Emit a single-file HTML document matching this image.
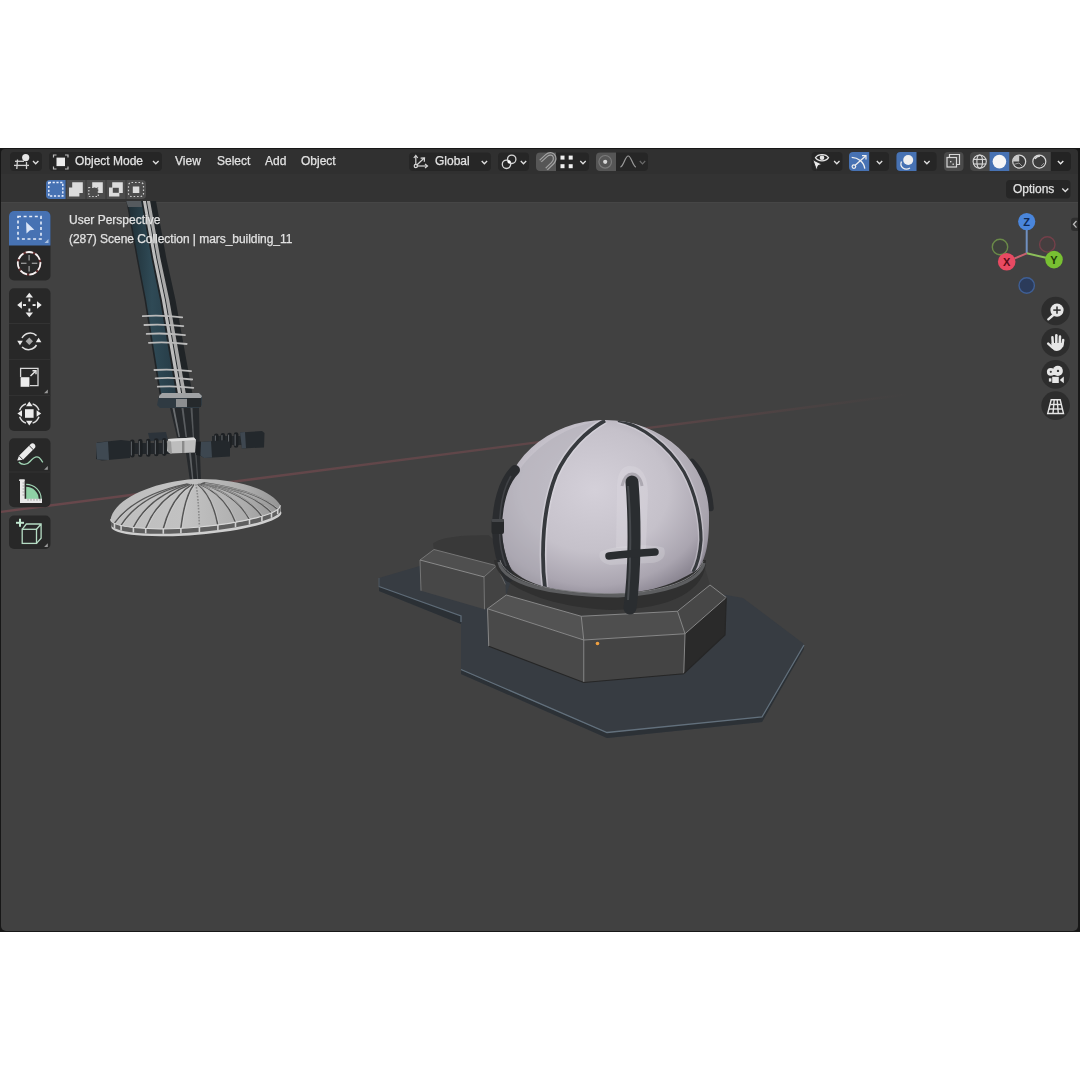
<!DOCTYPE html>
<html><head><meta charset="utf-8">
<style>
*{margin:0;padding:0;box-sizing:border-box}
html,body{width:1080px;height:1080px;background:#fff;overflow:hidden;font-family:"Liberation Sans",sans-serif;position:relative}
.a{position:absolute}
#win{left:0;top:148px;width:1080px;height:784px;background:#171717}
#h1{left:1px;top:1px;width:1077px;height:25px;background:#303030;border-radius:4px 4px 0 0}
#h2{left:1px;top:26px;width:1077px;height:28px;background:#333333}
#vp{left:1px;top:54px;width:1077px;height:729px;background:#414141;border-radius:0 0 5px 5px;overflow:hidden;border-top:1.5px solid #464646}
.t{position:absolute;color:#e2e2e2;font-size:12px;white-space:nowrap;line-height:14px;-webkit-font-smoothing:antialiased;will-change:transform;-webkit-text-stroke:0.25px #e2e2e2}
.btn{position:absolute;background:#1e1e1e;border-radius:4px}
.tb{position:absolute;left:8px;width:41px;background:#232323}
svg{position:absolute;overflow:visible}
</style></head><body>
<div id="win" class="a">
  <div id="h1" class="a"></div>
  <div id="h2" class="a"></div>
  <div id="vp" class="a"></div>
</div>

<svg class="a" style="left:0;top:0" width="1080" height="1080" viewBox="0 0 1080 1080">
<defs>
<clipPath id="vpc"><rect x="1" y="201" width="1077" height="730" rx="5"/></clipPath>
<linearGradient id="axg" x1="0" y1="0" x2="1" y2="0"><stop offset="0" stop-color="#7a4a50" stop-opacity="0.7"/><stop offset="0.7" stop-color="#744a4e" stop-opacity="0.55"/><stop offset="1" stop-color="#6a4444" stop-opacity="0"/></linearGradient>
<radialGradient id="domeg" cx="0.45" cy="0.4" r="0.65"><stop offset="0" stop-color="#d4d0d9"/><stop offset="0.55" stop-color="#c5c1ca"/><stop offset="0.85" stop-color="#aaa5b0"/><stop offset="1" stop-color="#8c8793"/></radialGradient>
<radialGradient id="dishg" cx="0.5" cy="0.1" r="0.9"><stop offset="0" stop-color="#d8d8d8"/><stop offset="0.7" stop-color="#bdbdbd"/><stop offset="1" stop-color="#8c8c8c"/></radialGradient>
<linearGradient id="tealg" x1="0" y1="0" x2="1" y2="0"><stop offset="0" stop-color="#1f2e35"/><stop offset="0.5" stop-color="#2f4a56"/><stop offset="1" stop-color="#263b46"/></linearGradient>
<clipPath id="domec"><path d="M501,515 A104,95 0 0 1 709,515 C709.5,545 705,560 698,569 C670,588 640,594 604,594 C560,593 527,585 512,570 C505,558 501,540 501,515 Z"/></clipPath>
</defs>
<g clip-path="url(#vpc)">
<!-- axis line -->
<line x1="0" y1="512" x2="910" y2="394" stroke="url(#axg)" stroke-width="2.4"/>
<!-- TOWER shaft -->
<g id="tower">
<!-- shaft -->
<polygon points="126.3,201 136.5,258 144.5,300 159.5,394 192.5,394 175.5,300 166.3,258 156.0,201" fill="#202427"/>
<polygon points="127.8,201 138.0,258 146.1,300 161.2,394 176.0,394 160.0,300 151.4,258 141.2,201" fill="url(#tealg)"/>
<polygon points="142.9,201 153.2,258 161.9,300 178.0,394 181.3,394 165.0,300 156.2,258 145.9,201" fill="#bdbdbd"/>
<polygon points="146.8,201 157.1,258 165.9,300 182.3,394 185.9,394 169.3,300 160.3,258 150.1,201" fill="#a9a9a9"/>
<polygon points="126.3,201 141,201 142,207 128,207" fill="#555a5e"/>
<path d="M142.8,316.1 Q162.5,314.90000000000003 182.2,317.3" stroke="#b9b9b9" stroke-width="1.8" fill="none" stroke-linecap="round"/>
<path d="M144.4,325 Q163.85000000000002,323.8 183.3,326.2" stroke="#b9b9b9" stroke-width="1.8" fill="none" stroke-linecap="round"/>
<path d="M146.7,333.9 Q165.85,332.7 185,335.09999999999997" stroke="#b9b9b9" stroke-width="1.8" fill="none" stroke-linecap="round"/>
<path d="M148.9,342.8 Q167.8,341.6 186.7,344.0" stroke="#b9b9b9" stroke-width="1.8" fill="none" stroke-linecap="round"/>
<path d="M154.4,370 Q172.75,368.8 191.1,371.2" stroke="#b9b9b9" stroke-width="1.8" fill="none" stroke-linecap="round"/>
<path d="M155.6,378.3 Q173.89999999999998,377.1 192.2,379.5" stroke="#b9b9b9" stroke-width="1.8" fill="none" stroke-linecap="round"/>
<path d="M157.8,386.7 Q175.55,385.5 193.3,387.9" stroke="#b9b9b9" stroke-width="1.8" fill="none" stroke-linecap="round"/>
<!-- clamp nut -->
<path d="M159,396 L162,393 L199,393 L202,396 L202,405 L199,408 L160,408 L157,405 Z" fill="#2f3a42"/>
<path d="M159,396 L162,393 L199,393 L202,396 L201,398 L159,398 Z" fill="#a0a2a4"/>
<rect x="176" y="399" width="11" height="8" fill="#8c8e90"/>
<rect x="187" y="398" width="14" height="9" fill="#25292c"/>
<!-- rods -->
<polygon points="170,408 199,408 199.5,437 200,453 201,481 190,481 186,453 177,437" fill="#26292c"/>
<path d="M172.5,408 L174.5,408 L180,437 L178.5,437 Z" fill="#6a6d70"/>
<path d="M181.5,408 L183.5,408 L187,437 L185.5,437 Z" fill="#5a5d60"/>
<path d="M190.5,408 L192.5,408 L194,437 L192.8,437 Z" fill="#55585b"/>
<path d="M189,453 L191,453 L193.5,481 L192.3,481 Z" fill="#5e6164"/>
<path d="M195,453 L196.5,453 L198.3,481 L197.3,481 Z" fill="#4a4d50"/>
<!-- back right springs + bar -->
<rect x="212" y="436" width="32" height="9" fill="#24282b"/>
<rect x="214.0" y="433.5" width="4.6" height="15.5" rx="2.3" fill="#1d2023"/>
<rect x="214.8" y="435.5" width="1.1" height="11.5" fill="#5e6266"/>
<rect x="220.6" y="433.1" width="4.6" height="15.5" rx="2.3" fill="#1d2023"/>
<rect x="221.4" y="435.1" width="1.1" height="11.5" fill="#5e6266"/>
<rect x="227.2" y="432.7" width="4.6" height="15.5" rx="2.3" fill="#1d2023"/>
<rect x="228.0" y="434.7" width="1.1" height="11.5" fill="#5e6266"/>
<rect x="233.8" y="432.3" width="4.6" height="15.5" rx="2.3" fill="#1d2023"/>
<rect x="234.6" y="434.3" width="1.1" height="11.5" fill="#5e6266"/>
<!-- far right block -->
<path d="M240,432.5 L262,431 L264.5,433 L264,447.5 L242,448.5 Z" fill="#23282c"/>
<path d="M240,432.5 L245,432 L246,448.3 L242,448.5 Z" fill="#3e4750"/>
<!-- back left block -->
<path d="M148,433 L166,432 L168,440 L150,441 Z" fill="#2c333a"/>
<!-- left bar + springs -->
<rect x="128" y="443" width="42" height="11" fill="#22262a"/>
<rect x="130.0" y="439.5" width="4.6" height="18.0" rx="2.3" fill="#1d2023"/>
<rect x="130.8" y="441.5" width="1.1" height="14.0" fill="#5e6266"/>
<rect x="138.0" y="439.1" width="4.6" height="18.0" rx="2.3" fill="#1d2023"/>
<rect x="138.8" y="441.1" width="1.1" height="14.0" fill="#5e6266"/>
<rect x="146.0" y="438.7" width="4.6" height="18.0" rx="2.3" fill="#1d2023"/>
<rect x="146.8" y="440.7" width="1.1" height="14.0" fill="#5e6266"/>
<rect x="154.0" y="438.3" width="4.6" height="18.0" rx="2.3" fill="#1d2023"/>
<rect x="154.8" y="440.3" width="1.1" height="14.0" fill="#5e6266"/>
<rect x="162.0" y="437.9" width="4.6" height="18.0" rx="2.3" fill="#1d2023"/>
<rect x="162.8" y="439.9" width="1.1" height="14.0" fill="#5e6266"/>
<!-- left block -->
<path d="M97,442.5 L121,440 L130,441 L130,458 L102,460.5 L96,459 Z" fill="#23282c"/>
<path d="M96,443 L108,441.5 L109,460 L97,459.5 Z" fill="#3f4952"/>
<!-- center clamp -->
<path d="M168,439 L194,437.5 L196,440 L195,452.5 L170,453.5 L167,451 Z" fill="#bdbdbd"/>
<path d="M168,439 L194,437.5 L196,440 L171,441.5 Z" fill="#dcdcdc"/>
<path d="M167,441 L171,441.5 L172,453.5 L168,452 Z" fill="#9a9a9a"/>
<rect x="182" y="441" width="2.4" height="12" fill="#8a8a8a"/>
<!-- right near block -->
<path d="M196,442 L201,441.5 L201,456 L196,455 Z" fill="#1c1f22"/>
<path d="M201,442 L226,440 L230,442.5 L230,456.5 L204,458 L200,455.5 Z" fill="#23282c"/>
<path d="M201,442 L211,441.3 L212,457.5 L204,458 L200.5,455.5 Z" fill="#3d4750"/>
</g>
<!-- DISH -->
<g id="dish">
<linearGradient id="dishl" x1="0" y1="0" x2="1" y2="0"><stop offset="0" stop-color="#bebebe"/><stop offset="0.45" stop-color="#c2c2c2"/><stop offset="0.8" stop-color="#acacac"/><stop offset="1" stop-color="#959595"/></linearGradient>
<path d="M110.6,519.3 A85,15 -4.75 0 0 280.3,505.2 L280.8,511.2 A85,15 -4.75 0 1 111.6,528.3 Z" fill="#cfcfcf"/>
<path d="M110.6,519.3 A85,15 -4.75 0 0 280.3,505.2 L280.3,509.2 A85,15 -4.75 0 1 111.1,525.3 Z" fill="#5f5f5f"/>
<path d="M110.6,519.3 C114,500 150,482 195,479 C238,478 272,490 280.3,505.2 A85,15 -4.75 0 1 110.6,519.3 Z" fill="url(#dishl)"/>
<path d="M187.4,484.0 Q134.9,495.0 114.5,523.2" stroke="#555" stroke-width="1.6" fill="none"/>
<path d="M188.5,484.3 Q136.1,495.3 115.7,523.2" stroke="#d6d6d6" stroke-width="0.7" fill="none" opacity="0.8"/>
<line x1="114.5" y1="523.2" x2="114.5" y2="528.2" stroke="#d0d0d0" stroke-width="1.6"/>
<path d="M188.1,484.2 Q139.8,495.7 121.1,525.4" stroke="#555" stroke-width="1.6" fill="none"/>
<path d="M189.2,484.5 Q141.0,496.0 122.3,525.4" stroke="#d6d6d6" stroke-width="0.7" fill="none" opacity="0.8"/>
<line x1="121.1" y1="525.4" x2="121.1" y2="530.4" stroke="#d0d0d0" stroke-width="1.6"/>
<path d="M189.3,484.3 Q149.0,496.4 133.4,527.5" stroke="#555" stroke-width="1.6" fill="none"/>
<path d="M190.4,484.6 Q150.2,496.7 134.6,527.5" stroke="#d6d6d6" stroke-width="0.7" fill="none" opacity="0.8"/>
<line x1="133.4" y1="527.5" x2="133.4" y2="532.5" stroke="#d0d0d0" stroke-width="1.6"/>
<path d="M190.5,484.4 Q158.2,496.7 145.7,528.4" stroke="#555" stroke-width="1.6" fill="none"/>
<path d="M191.6,484.7 Q159.4,497.0 146.9,528.4" stroke="#d6d6d6" stroke-width="0.7" fill="none" opacity="0.8"/>
<line x1="145.7" y1="528.4" x2="145.7" y2="533.4" stroke="#d0d0d0" stroke-width="1.6"/>
<path d="M192.3,484.4 Q171.4,496.9 163.3,528.8" stroke="#555" stroke-width="1.6" fill="none"/>
<path d="M193.4,484.7 Q172.6,497.2 164.5,528.8" stroke="#d6d6d6" stroke-width="0.7" fill="none" opacity="0.8"/>
<line x1="163.3" y1="528.8" x2="163.3" y2="533.8" stroke="#d0d0d0" stroke-width="1.6"/>
<path d="M194.0,484.4 Q184.6,496.7 180.9,528.2" stroke="#555" stroke-width="1.6" fill="none"/>
<path d="M195.1,484.7 Q185.8,497.0 182.1,528.2" stroke="#d6d6d6" stroke-width="0.7" fill="none" opacity="0.8"/>
<line x1="180.9" y1="528.2" x2="180.9" y2="533.2" stroke="#d0d0d0" stroke-width="1.6"/>
<path d="M195.9,484.3 Q198.4,496.2 199.4,527.0" stroke="#8a8a8a" stroke-width="1.6" fill="none" stroke-dasharray="1.6,1.4"/>
<line x1="199.4" y1="527.0" x2="199.4" y2="532.0" stroke="#d0d0d0" stroke-width="1.6"/>
<path d="M197.7,484.1 Q212.3,495.6 217.9,525.0" stroke="#555" stroke-width="1.6" fill="none"/>
<path d="M198.8,484.4 Q213.5,495.9 219.1,525.0" stroke="#d6d6d6" stroke-width="0.7" fill="none" opacity="0.8"/>
<line x1="217.9" y1="525.0" x2="217.9" y2="530.0" stroke="#d0d0d0" stroke-width="1.6"/>
<path d="M199.5,483.9 Q225.4,494.7 235.5,522.3" stroke="#555" stroke-width="1.6" fill="none"/>
<path d="M200.6,484.2 Q226.6,495.0 236.7,522.3" stroke="#d6d6d6" stroke-width="0.7" fill="none" opacity="0.8"/>
<line x1="235.5" y1="522.3" x2="235.5" y2="527.3" stroke="#d0d0d0" stroke-width="1.6"/>
<path d="M200.9,483.7 Q235.9,493.7 249.5,519.5" stroke="#555" stroke-width="1.6" fill="none"/>
<path d="M202.0,484.0 Q237.1,494.0 250.7,519.5" stroke="#d6d6d6" stroke-width="0.7" fill="none" opacity="0.8"/>
<line x1="249.5" y1="519.5" x2="249.5" y2="524.5" stroke="#d0d0d0" stroke-width="1.6"/>
<path d="M202.1,483.4 Q245.2,492.6 261.9,516.2" stroke="#555" stroke-width="1.6" fill="none"/>
<path d="M203.2,483.7 Q246.4,492.9 263.1,516.2" stroke="#d6d6d6" stroke-width="0.7" fill="none" opacity="0.8"/>
<line x1="261.9" y1="516.2" x2="261.9" y2="521.2" stroke="#d0d0d0" stroke-width="1.6"/>
<path d="M203.1,483.2 Q252.3,491.5 271.5,512.8" stroke="#555" stroke-width="1.6" fill="none"/>
<path d="M204.2,483.5 Q253.5,491.8 272.7,512.8" stroke="#d6d6d6" stroke-width="0.7" fill="none" opacity="0.8"/>
<line x1="271.5" y1="512.8" x2="271.5" y2="517.8" stroke="#d0d0d0" stroke-width="1.6"/>
<path d="M203.7,482.9 Q257.0,490.3 277.7,509.2" stroke="#555" stroke-width="1.6" fill="none"/>
<path d="M204.8,483.2 Q258.2,490.6 278.9,509.2" stroke="#d6d6d6" stroke-width="0.7" fill="none" opacity="0.8"/>
<line x1="277.7" y1="509.2" x2="277.7" y2="514.2" stroke="#d0d0d0" stroke-width="1.6"/>
<path d="M110.6,519.3 A85,15 -4.75 0 0 280.3,505.2" stroke="#d8d8d8" stroke-width="1.1" fill="none"/>
</g>
<!-- BASE PLATE -->
<polygon points="379,578 440,560 726,595 743,598 804,644 762,722 607,738 461,674 461,624 379,591" fill="#373c42"/>
<polygon points="379,586.5 461,616 461,624 379,591" fill="#2b3035"/>
<polygon points="461,670 607,733 762,717 804,645 804,649 762,722 607,738 461,674" fill="#2c3136"/>
<polyline points="379,586.5 461,616 461,622" fill="none" stroke="#5e6b77" stroke-width="1.3"/>
<polyline points="461,669.5 607,732.5 762,717 804,645" fill="none" stroke="#62707c" stroke-width="1.3"/>
<line x1="379" y1="578" x2="379" y2="587" stroke="#4e5963" stroke-width="1"/>
<!-- small block -->
<path d="M434,549.5 L433,543.5 C440,538 455,535 488.7,535.2 L500,545 L496.6,565.7 Z" fill="#393939"/>
<polygon points="420,560 434,549.5 496.6,565.7 484,576.9" fill="#4f4f4f"/>
<polygon points="420,560 484,576.9 484.5,609.3 421,590.7" fill="#474747"/>
<polygon points="484,576.9 496.6,565.7 505.4,584.3 506.3,600 484.5,609.3" fill="#434343"/>
<polyline points="421,590.7 420,560 434,549.5 496.6,565.7 484,576.9 484.5,609.3" fill="none" stroke="#7a7a7a" stroke-width="0.9"/>
<line x1="420" y1="560" x2="484" y2="576.9" stroke="#8a8a8a" stroke-width="1"/>
<line x1="496.6" y1="565.7" x2="505.4" y2="584.3" stroke="#6a6a6a" stroke-width="0.9"/>
<!-- main block -->
<polygon points="506,595 515,570 705,568 710,585 677.5,611 581,616" fill="#3b3b3b"/>
<polygon points="487.5,608.75 506.25,595 581.25,616.25 583.75,640" fill="#535353"/>
<polygon points="487.5,608.75 583.75,640 583.75,682.5 488.75,646.25" fill="#494949"/>
<polygon points="581.25,616.25 677.5,611.25 685,633.75 583.75,640" fill="#4e4e4e"/>
<polygon points="583.75,640 685,633.75 683.75,673.75 583.75,682.5" fill="#444444"/>
<polygon points="677.5,611.25 710,585 726.25,597.5 685,633.75" fill="#474747"/>
<polygon points="685,633.75 726.25,597.5 725,635 683.75,673.75" fill="#2a2a2a"/>
<g fill="none" stroke="#8a8a8a" stroke-width="0.95">
<polyline points="488.75,646.25 487.5,608.75 583.75,640 685,633.75 726.25,597.5"/>
<polyline points="506.25,595 581.25,616.25 677.5,611.25 710,585"/>
<polyline points="487.5,608.75 506.25,595"/>
<polyline points="581.25,616.25 583.75,640 583.75,682.5"/>
<polyline points="677.5,611.25 685,633.75 683.75,673.75"/>
<polyline points="710,585 726.25,597.5"/>
</g>
<polyline points="488.75,646.25 583.75,682.5 683.75,673.75 725,635 726.25,597.5" fill="none" stroke="#262626" stroke-width="1.2"/>
<!-- ring bowl -->
<path d="M494,560 C497,590 560,609 613,610 C672,609 706,590 706,560 Z" fill="#303030"/>
<path d="M692,462 C703,473 709,488 710.5,508" stroke="#2a2c2f" stroke-width="6.5" fill="none" stroke-linecap="round"/>
<!-- dome body -->
<path d="M501,515 A104,95 0 0 1 709,515 C709.5,545 705,560 698,569 C670,588 640,594 604,594 C560,593 527,585 512,570 C505,558 501,540 501,515 Z" fill="url(#domeg)"/>
<!-- left panel darker -->
<g clip-path="url(#domec)">
<path d="M605,420.5 C560,425 520,455 507,495 C501,520 502,548 510,566 C520,578 532,584 544,587 C543,550 545,505 556,476 C566,452 583,432 605,420.5 Z" fill="#aeaab3" opacity="0.45"/>
<!-- right edge darker -->
<path d="M618,420.5 C665,428 700,460 707,500 C711,530 706,555 698,569 C699,545 701,520 697,500 C690,462 660,432 618,420.5 Z" fill="#a8a4ad" opacity="0.3"/>
<!-- seams -->
<path d="M605,420.5 C588,430 568,448 556,475 C546,500 543,530 543,555 C543,570 544,580 545,588" stroke="#e2dfe7" stroke-width="7" fill="none" opacity="0.45"/>
<path d="M618,420.5 C640,425 668,444 684,472 C696,494 701,520 701,540 C700,555 697,565 693,572" stroke="#e2dfe7" stroke-width="6" fill="none" opacity="0.4"/>
<path d="M605,420.5 C588,430 568,448 556,475 C546,500 543,530 543,555 C543,570 544,580 545,588" stroke="#36393d" stroke-width="3.8" fill="none"/>
<path d="M618,420.5 C640,425 668,444 684,472 C696,494 701,520 701,540 C700,555 697,565 693,572" stroke="#36393d" stroke-width="3.2" fill="none"/>
</g>
<!-- right arm sliver -->

<!-- left arm -->
<path d="M515,470 C503,482 497,505 497,530 C497.5,548 501,562 509,577" stroke="#2a2c2f" stroke-width="10" fill="none" stroke-linecap="round"/>
<path d="M511,476 C503,489 499.5,508 499.5,530 C499.5,545 502,556 506,566" stroke="#404246" stroke-width="1.6" fill="none"/>
<rect x="491.5" y="519" width="12.5" height="15" rx="2" fill="#27292b"/>
<rect x="491.5" y="519" width="12.5" height="3" rx="1" fill="#45474a"/>
<!-- ring rail -->
<path d="M499,562 C502,578 530,588 560,592 C580,595 600,596 618,596 C660,594 700,583 704,563" stroke="#5d5e60" stroke-width="3.2" fill="none"/>
<path d="M500,560 C504,575 530,586 560,590 C580,593 600,594 618,594 C660,592 698,581 703,561" stroke="#7a7b7d" stroke-width="1" fill="none"/>
<!-- handle groove halo -->
<path d="M630,466 C643,466 648,478 648,494 L646,548 L616,548 L617,490 C617,476 620,466 630,466 Z" fill="#e2dfe6" opacity="0.3"/>
<path d="M600,552 C612,545 652,543 664,548 C667,556 662,563 650,563 L610,565 C601,563 598,558 600,552 Z" fill="#e0dde4" opacity="0.28"/>

<!-- handle -->
<path d="M622,486 C624,478 628,474 632,474 C636,474 641,478 642,486" stroke="#8e8a94" stroke-width="3" fill="none" opacity="0.55"/>
<path d="M632,482 C635,520 635,570 630,608" stroke="#2a2d30" stroke-width="13" fill="none" stroke-linecap="round"/>
<path d="M628,486 C631,520 631,560 628,600" stroke="#46494d" stroke-width="2" fill="none"/>
<path d="M609,556 C625,554 640,553 655,552" stroke="#2a2d30" stroke-width="7.5" fill="none" stroke-linecap="round"/>
<!-- orange origin dot -->
<circle cx="597.5" cy="643.5" r="1.8" fill="#f0a040"/>
</g>
</svg>

<!-- UI overlay -->
<svg class="a" style="left:0;top:0" width="1080" height="1080" viewBox="0 0 1080 1080">
<g id="hdr">
<!-- editor type -->
<rect x="10" y="152" width="32" height="19" rx="4" fill="#262626"/>
<g stroke="#d0d0d0" stroke-width="1.3" fill="none">
<line x1="15" y1="161.3" x2="24" y2="161.3"/><line x1="14" y1="165.4" x2="29" y2="165.4"/>
<line x1="17.5" y1="159.5" x2="16.8" y2="169"/><line x1="26.5" y1="162" x2="26.5" y2="169"/>
</g>
<circle cx="25.7" cy="157.6" r="3.6" fill="#e6e6e6"/>
<path d="M33,161 L35.7,163.8 L38.4,161" stroke="#e0e0e0" stroke-width="1.3" fill="none"/>
<!-- object mode -->
<rect x="49" y="152" width="113" height="19" rx="4" fill="#262626"/>
<path d="M53.5,157.5 V155 H56.5 M65,155 H68 V157.5 M68,166.5 V169 H65 M56.5,169 H53.5 V166.5" stroke="#bdbdbd" stroke-width="1.2" fill="none"/>
<rect x="56.5" y="157.6" width="8.5" height="8.5" fill="#ececec"/>
<path d="M153,161 L155.8,163.8 L158.6,161" stroke="#e0e0e0" stroke-width="1.3" fill="none"/>
<!-- global -->
<rect x="409" y="152.5" width="82" height="18.5" rx="4" fill="#262626"/>
<g stroke="#d6d6d6" stroke-width="1.2" fill="none">
<line x1="415.8" y1="156" x2="415.8" y2="165"/><line x1="416.8" y1="166" x2="427" y2="166"/><line x1="416.8" y1="165" x2="424" y2="158.3"/>
<path d="M413.8,158 L415.8,155.5 L417.8,158"/><path d="M425,164 L427.5,166 L425,168"/><path d="M420.6,158.2 L424.5,158 L424.3,161.8"/>
<circle cx="415.8" cy="166" r="1.6"/>
</g>
<path d="M481.7,161 L484.4,163.8 L487.1,161" stroke="#e0e0e0" stroke-width="1.3" fill="none"/>
<!-- pivot -->
<rect x="498" y="152.5" width="31" height="18.5" rx="4" fill="#262626"/>
<circle cx="506.5" cy="164.3" r="4.2" stroke="#d6d6d6" stroke-width="1.3" fill="none"/>
<circle cx="511.7" cy="159.3" r="4.2" stroke="#d6d6d6" stroke-width="1.3" fill="none"/>
<circle cx="509.1" cy="161.8" r="1.6" fill="#ffffff"/>
<path d="M520.8,161 L523.5,163.8 L526.2,161" stroke="#e0e0e0" stroke-width="1.3" fill="none"/>
<!-- snap -->
<rect x="536" y="152.5" width="53" height="18.5" rx="4" fill="#262626"/>
<path d="M536,156.5 a4,4 0 0 1 4,-4 H556 V171 H540 a4,4 0 0 1 -4,-4 Z" fill="#565656"/>
<path d="M540.5,161 L546.5,155.5 C549.5,152.8 553.5,153.5 554.5,157 C555.2,159.5 554.2,161.5 552.3,163.4 L546.5,169" stroke="#a4a4a4" stroke-width="3.6" fill="none"/>
<path d="M540.5,161 L546.5,155.5 C549.5,152.8 553.5,153.5 554.5,157 C555.2,159.5 554.2,161.5 552.3,163.4 L546.5,169" stroke="#5a5a5a" stroke-width="1.3" fill="none"/>
<g fill="#f0f0f0"><rect x="560.5" y="155.6" width="4" height="4"/><rect x="568.7" y="155.6" width="4" height="4"/><rect x="560.5" y="164.2" width="4" height="4"/><rect x="568.7" y="164.2" width="4" height="4"/></g>
<path d="M580.3,161 L583,163.8 L585.7,161" stroke="#e0e0e0" stroke-width="1.3" fill="none"/>
<!-- proportional -->
<rect x="596" y="152.5" width="52" height="18.5" rx="4" fill="#262626"/>
<path d="M596,156.5 a4,4 0 0 1 4,-4 H616 V171 H600 a4,4 0 0 1 -4,-4 Z" fill="#565656"/>
<circle cx="605.2" cy="161.8" r="6.3" stroke="#7a7a7a" stroke-width="1.2" fill="none"/>
<circle cx="605.2" cy="161.8" r="2.1" fill="#d8d8d8"/>
<path d="M620.3,167 C623.5,167 625,156 628.2,156 C631.4,156 632.9,167 636,167" stroke="#9a9a9a" stroke-width="1.2" fill="none"/>
<path d="M639.8,161 L642.5,163.8 L645.2,161" stroke="#6a6a6a" stroke-width="1.2" fill="none"/>
<!-- visibility -->
<rect x="811.5" y="152" width="31" height="19" rx="4" fill="#262626"/>
<path d="M815.5,157.7 C818,153.5 826,153.5 828.5,157.7 C826,161.9 818,161.9 815.5,157.7 Z" stroke="#e6e6e6" stroke-width="1.3" fill="none"/>
<circle cx="822" cy="157.7" r="2.3" fill="#e6e6e6"/>
<path d="M812.8,159.8 L822,164.3 L818.2,165.6 L816.6,170.2 Z" fill="#ececec" stroke="#262626" stroke-width="0.9"/>
<path d="M834.1,161 L836.8,163.8 L839.5,161" stroke="#e0e0e0" stroke-width="1.3" fill="none"/>
<!-- gizmo -->
<rect x="849" y="152" width="40" height="19" rx="4" fill="#262626"/>
<path d="M849,156 a4,4 0 0 1 4,-4 H869.2 V171 H853 a4,4 0 0 1 -4,-4 Z" fill="#4772b3"/>
<path d="M851.7,157.3 C858,157.5 864,162 864.8,168.7" stroke="#f0f0f0" stroke-width="1.3" fill="none"/>
<circle cx="853.9" cy="166.6" r="1.8" stroke="#f0f0f0" stroke-width="1.2" fill="none"/>
<line x1="855.2" y1="165.3" x2="865.6" y2="156" stroke="#f0f0f0" stroke-width="1.2"/>
<path d="M862,155.6 H866 V159.6" stroke="#f0f0f0" stroke-width="1.2" fill="none"/>
<path d="M876.8,161 L879.5,163.8 L882.2,161" stroke="#e0e0e0" stroke-width="1.3" fill="none"/>
<!-- overlays -->
<rect x="896.4" y="152" width="40.2" height="19" rx="4" fill="#262626"/>
<path d="M896.4,156 a4,4 0 0 1 4,-4 H916.5 V171 H900.4 a4,4 0 0 1 -4,-4 Z" fill="#4772b3"/>
<circle cx="908.2" cy="160" r="5" fill="#f0f0f0"/>
<path d="M901.5,161.5 C899,167 905,171 910,168" stroke="#f0f0f0" stroke-width="1.3" fill="none"/>
<path d="M924.2,161 L926.9,163.8 L929.6,161" stroke="#e0e0e0" stroke-width="1.3" fill="none"/>
<!-- xray -->
<rect x="944" y="152" width="19.5" height="19" rx="4" fill="#4a4a4a"/>
<rect x="947" y="157.5" width="9.5" height="9.5" stroke="#d8d8d8" stroke-width="1.2" fill="none"/>
<path d="M949.5,157 V154.5 H959.5 V164.5 H957" stroke="#d8d8d8" stroke-width="1.2" fill="none"/>
<rect x="950" y="161" width="1.4" height="1.4" fill="#d8d8d8"/><rect x="952.5" y="163.5" width="1.4" height="1.4" fill="#d8d8d8"/>
<!-- shading -->
<rect x="970" y="152" width="101" height="19" rx="4" fill="#232323"/>
<path d="M970,156 a4,4 0 0 1 4,-4 H1050.8 V171 H974 a4,4 0 0 1 -4,-4 Z" fill="#464646"/>
<rect x="989.6" y="152" width="19.6" height="19" fill="#4772b3"/>
<g stroke="#d8d8d8" stroke-width="1.1" fill="none">
<circle cx="979.7" cy="161.6" r="6.6"/><line x1="973.1" y1="159.4" x2="986.3" y2="159.4"/><line x1="973.1" y1="164" x2="986.3" y2="164"/>
<ellipse cx="979.7" cy="161.6" rx="2.8" ry="6.6"/>
</g>
<circle cx="999.4" cy="161.6" r="6.8" fill="#f6f6f6"/>
<circle cx="1019.2" cy="161.6" r="6.5" stroke="#d8d8d8" stroke-width="1.2" fill="#3c3c3c"/>
<path d="M1019.2,155.1 A6.5,6.5 0 0 0 1012.7,161.6 L1019.2,161.6 Z" fill="#c8c8c8"/>
<path d="M1013.5,164.5 L1019,163 L1023,167" stroke="#9a9a9a" stroke-width="1" fill="none"/>
<circle cx="1039.3" cy="161.6" r="6.5" stroke="#d8d8d8" stroke-width="1.2" fill="#3c3c3c"/>
<path d="M1035,159 C1036,157 1038,156 1040,156" stroke="#d8d8d8" stroke-width="1.4" fill="none"/>
<path d="M1041,166 L1044,163" stroke="#8a8a8a" stroke-width="1" fill="none"/>
<path d="M1057.9,161 L1060.6,163.8 L1063.3,161" stroke="#e8e8e8" stroke-width="1.4" fill="none"/>
</g>
<g id="toolbar">
<!-- group backgrounds -->
<rect x="9" y="211" width="41.5" height="69.5" rx="5" fill="#282828"/>
<rect x="9" y="288.3" width="41.5" height="142.6" rx="5" fill="#282828"/>
<rect x="9" y="438.3" width="41.5" height="69" rx="5" fill="#282828"/>
<rect x="9" y="515.5" width="41.5" height="33.5" rx="5" fill="#282828"/>
<path d="M9,216 a5,5 0 0 1 5,-5 H45.5 a5,5 0 0 1 5,5 V245.4 H9 Z" fill="#4772b3"/>
<g stroke="#333" stroke-width="1"><line x1="9" y1="323.5" x2="50.5" y2="323.5"/><line x1="9" y1="359.4" x2="50.5" y2="359.4"/><line x1="9" y1="395.4" x2="50.5" y2="395.4"/><line x1="9" y1="472" x2="50.5" y2="472"/></g>
<!-- select box icon -->
<rect x="18" y="216.5" width="23" height="22.5" stroke="#e8eefa" stroke-width="1.6" stroke-dasharray="3,2.6" fill="none"/>
<path d="M26.1,222 L34.3,229.8 L30,230.3 L26.5,233.5 Z" fill="#dce6f7"/>
<path d="M48.5,239 V243 H44.5 Z" fill="#aac0e0"/>
<!-- cursor icon -->
<circle cx="29.1" cy="263.3" r="11.3" stroke="#6a3434" stroke-width="1.8" fill="none"/>
<circle cx="29.1" cy="263.3" r="11.3" stroke="#f2f2f2" stroke-width="1.8" stroke-dasharray="7.5,2.4" fill="none"/>
<g stroke="#9a9a9a" stroke-width="1.3"><line x1="29.1" y1="255" x2="29.1" y2="260.5"/><line x1="29.1" y1="266" x2="29.1" y2="271.5"/><line x1="21" y1="263.3" x2="26.5" y2="263.3"/><line x1="31.8" y1="263.3" x2="37.3" y2="263.3"/></g>
<!-- move icon -->
<g fill="#ececec">
<path d="M29.3,292.8 L33,297.5 H25.6 Z"/><path d="M29.3,317.2 L33,312.5 H25.6 Z"/>
<path d="M17.2,305 L21.9,301.3 V308.7 Z"/><path d="M41.7,305 L37,301.3 V308.7 Z"/>
<rect x="28.4" y="298.5" width="1.9" height="3"/><rect x="28.4" y="308.5" width="1.9" height="3"/>
<rect x="23" y="304.1" width="3" height="1.9"/><rect x="32.6" y="304.1" width="3" height="1.9"/>
</g>
<!-- rotate icon -->
<path d="M22,338 A9.3,9.3 0 0 1 36.5,335.6" stroke="#e0e0e0" stroke-width="1.5" fill="none"/>
<path d="M36.5,345 A9.3,9.3 0 0 1 22,347" stroke="#e0e0e0" stroke-width="1.5" fill="none"/>
<path d="M17.2,340.8 H22.8 L20,345.3 Z" fill="#ececec"/>
<path d="M35.8,342.3 H41.4 L38.6,337.8 Z" fill="#ececec"/>
<path d="M29.3,337.4 L33,341.2 L29.3,345 L25.6,341.2 Z" fill="#a8a8a8"/>
<!-- scale icon -->
<path d="M20.6,377 V368.3 H38 V385.7 H30" stroke="#d8d8d8" stroke-width="1.3" fill="none"/>
<rect x="20.6" y="377.2" width="8.8" height="9.6" fill="#ececec"/>
<line x1="30.5" y1="376" x2="35.5" y2="371.2" stroke="#e8e8e8" stroke-width="1.4"/>
<path d="M32.5,370.8 H36 V374.2" stroke="#e8e8e8" stroke-width="1.4" fill="none"/>
<path d="M47.8,389.5 V393.2 H44.1 Z" fill="#9a9a9a"/>
<!-- transform icon -->
<path d="M38.94,416.82 A10.2,10.2 0 0 1 32.62,423.14 M25.98,423.14 A10.2,10.2 0 0 1 19.66,416.82 M19.66,410.18 A10.2,10.2 0 0 1 25.98,403.86 M32.62,403.86 A10.2,10.2 0 0 1 38.94,410.18" stroke="#dedede" stroke-width="1.5" fill="none"/>
<rect x="25" y="409.2" width="8.6" height="8.6" fill="#ececec"/>
<g fill="#ececec">
<path d="M29.3,401.6 L32.6,406.2 H26 Z"/><path d="M29.3,425.4 L32.6,420.8 H26 Z"/>
<path d="M17.4,413.5 L22,410.2 V416.8 Z"/><path d="M41.2,413.5 L36.6,410.2 V416.8 Z"/>
</g>
<!-- annotate icon -->
<path d="M18.8,462 C22,465.5 27,465 30,461.5 C33,458 36,455.5 39,457.5 C41,459 42,461 42.8,462.4" stroke="#9fd3b3" stroke-width="1.4" fill="none"/>
<path d="M17.2,460.6 L19,455.8 L30.8,444 C31.8,443 33.6,443.2 34.6,444.2 C35.6,445.2 35.8,447 34.8,448 L23,459.8 Z" fill="#ececec"/>
<line x1="19.2" y1="456" x2="22.8" y2="459.6" stroke="#282828" stroke-width="0.9"/>
<line x1="29.2" y1="445.6" x2="33" y2="449.4" stroke="#282828" stroke-width="0.9"/>
<path d="M47.8,466 V469.7 H44.1 Z" fill="#9a9a9a"/>
<!-- measure icon -->
<path d="M26.2,486.8 A12.5,12.5 0 0 1 38.7,499.3 H26.2 Z" fill="#8fd1a6"/>
<path d="M26.2,484.3 A15,15 0 0 1 41.2,499.3" stroke="#9fd3b3" stroke-width="1.2" fill="none"/>
<rect x="20" y="479.5" width="4.6" height="23.5" fill="#e8e8e8"/>
<rect x="20" y="498.8" width="22" height="4.2" fill="#e8e8e8"/>
<rect x="19" y="479.5" width="5.6" height="1.4" fill="#e8e8e8"/>
<g stroke="#777" stroke-width="0.6"><line x1="22.5" y1="483" x2="24.6" y2="483"/><line x1="22.5" y1="486" x2="24.6" y2="486"/><line x1="22.5" y1="489" x2="24.6" y2="489"/><line x1="22.5" y1="492" x2="24.6" y2="492"/><line x1="22.5" y1="495" x2="24.6" y2="495"/><line x1="28" y1="498.8" x2="28" y2="500.8"/><line x1="31" y1="498.8" x2="31" y2="500.8"/><line x1="34" y1="498.8" x2="34" y2="500.8"/><line x1="37" y1="498.8" x2="37" y2="500.8"/><line x1="40" y1="498.8" x2="40" y2="500.8"/></g>
<!-- add cube icon -->
<g stroke="#b5dcc4" stroke-width="1.3" fill="none">
<rect x="22.2" y="529.3" width="14.3" height="14.1"/>
<path d="M22.2,529.3 L26.3,524 H41.1 V538.3 L36.5,543.4 M36.5,529.3 L41.1,524"/>
</g>
<g stroke="#c0e6cf" stroke-width="2"><line x1="16" y1="522.8" x2="24" y2="522.8"/><line x1="20" y1="518.8" x2="20" y2="526.8"/></g>
<path d="M47.8,543.2 V546.9 H44.1 Z" fill="#9a9a9a"/>
</g>
<g id="navgizmo">
<!-- axes -->
<line x1="1026.7" y1="253.3" x2="1026.7" y2="229" stroke="#7090c0" stroke-width="2"/>
<line x1="1026.7" y1="253.3" x2="1046" y2="257.8" stroke="#8cbf5a" stroke-width="2"/>
<line x1="1026.7" y1="253.3" x2="1014.5" y2="258.5" stroke="#c9606e" stroke-width="2"/>
<circle cx="1000" cy="247" r="7.7" stroke="#6a8a48" stroke-width="1.4" fill="#3a4234" fill-opacity="0.4"/>
<circle cx="1047.3" cy="244.4" r="7.7" stroke="#74404a" stroke-width="1.4" fill="#4a3a3c" fill-opacity="0.4"/>
<circle cx="1026.7" cy="285.5" r="7.7" stroke="#3f5f95" stroke-width="1.4" fill="#2b3b5a"/>
<circle cx="1026.7" cy="221.6" r="8.6" fill="#4a86dc"/>
<circle cx="1054" cy="259.6" r="8.8" fill="#78c032"/>
<circle cx="1006.7" cy="261.8" r="8.8" fill="#e84a62"/>
<text x="1026.7" y="225.6" font-family="Liberation Sans" font-weight="bold" font-size="11" fill="#0f2a55" text-anchor="middle">Z</text>
<text x="1054" y="263.6" font-family="Liberation Sans" font-weight="bold" font-size="11" fill="#1d3a08" text-anchor="middle">Y</text>
<text x="1006.7" y="265.8" font-family="Liberation Sans" font-weight="bold" font-size="11" fill="#5a0a18" text-anchor="middle">X</text>
<!-- nav buttons -->
<g fill="#2d2d2d"><circle cx="1055.6" cy="311" r="14.3"/><circle cx="1055.6" cy="342.4" r="14.3"/><circle cx="1055.6" cy="374.4" r="14.3"/><circle cx="1055.6" cy="405.6" r="14.3"/></g>
<!-- zoom -->
<circle cx="1057" cy="310.1" r="6.6" fill="#e6e6e6"/>
<g stroke="#2d2d2d" stroke-width="1.5"><line x1="1057" y1="306.4" x2="1057" y2="313.8"/><line x1="1053.3" y1="310.1" x2="1060.7" y2="310.1"/></g>
<line x1="1052.8" y1="315.5" x2="1048.3" y2="319.3" stroke="#e6e6e6" stroke-width="2.4" stroke-linecap="round"/>
<!-- hand -->
<g stroke="#e6e6e6" stroke-width="2.5" stroke-linecap="round" fill="none">
<line x1="1052.4" y1="337.3" x2="1052.9" y2="345"/><line x1="1056.3" y1="335.3" x2="1056.3" y2="345"/><line x1="1060" y1="336.6" x2="1059.6" y2="345"/><line x1="1063.2" y1="340" x2="1062.2" y2="346"/>
<line x1="1048.2" y1="343.6" x2="1052.6" y2="347.6"/>
</g>
<path d="M1051.5,343 H1063.5 C1063.5,347 1061,351 1056.5,351 C1053,351 1051.5,348 1051.5,343 Z" fill="#e6e6e6"/>
<!-- camera -->
<circle cx="1050.8" cy="371.8" r="3.9" fill="#e6e6e6"/><circle cx="1057.8" cy="370.9" r="5.1" fill="#e6e6e6"/>
<rect x="1050.8" y="369.5" width="7" height="5.5" fill="#e6e6e6"/>
<circle cx="1050.8" cy="371.8" r="1.1" fill="#3a3a3a"/><circle cx="1058" cy="370.9" r="1.2" fill="#3a3a3a"/>
<rect x="1052.2" y="376.8" width="6.6" height="6.2" fill="#e6e6e6"/>
<rect x="1048.9" y="378.3" width="2.5" height="3.3" fill="#e6e6e6"/>
<path d="M1059.8,379.9 L1063.8,376.6 V383.3 Z" fill="#e6e6e6"/>
<!-- grid persp -->
<g stroke="#e6e6e6" stroke-width="1.4" fill="none">
<path d="M1051.2,399.8 H1060.2 L1063.5,413.5 H1047.7 Z"/>
<line x1="1050.2" y1="404.5" x2="1061.3" y2="404.5"/><line x1="1049" y1="409" x2="1062.4" y2="409"/>
<line x1="1054.2" y1="399.8" x2="1053" y2="413.5"/><line x1="1057.2" y1="399.8" x2="1058.3" y2="413.5"/>
</g>
<!-- side tab -->
<path d="M1078,217.8 H1074 a3,3 0 0 0 -3,3 V228 a3,3 0 0 0 3,3 H1078 Z" fill="#2e2e2e"/>
<path d="M1076.5,221 L1073.5,224.3 L1076.5,227.6" stroke="#bdbdbd" stroke-width="1.3" fill="none"/>
</g>

<g id="hdr2">
<!-- selection modes -->
<rect x="46" y="180" width="100" height="19" rx="4" fill="#4c4c4c"/>
<path d="M46,184 a4,4 0 0 1 4,-4 H66 V199 H50 a4,4 0 0 1 -4,-4 Z" fill="#4772b3"/>
<g stroke="#323232" stroke-width="0.8"><line x1="86" y1="180" x2="86" y2="199"/><line x1="106" y1="180" x2="106" y2="199"/><line x1="126" y1="180" x2="126" y2="199"/><line x1="66" y1="180" x2="66" y2="199"/></g>
<rect x="48.8" y="182.5" width="14" height="13.5" stroke="#eaf0ff" stroke-width="1.4" stroke-dasharray="2.2,1.6" fill="none"/>
<path d="M69,196.4 V187.6 H72.2 V182.2 H82.8 V193.1 H79.4 V196.4 Z" fill="#dcdcdc"/>
<rect x="88.8" y="187.5" width="9.5" height="9" stroke="#cfcfcf" stroke-width="1.2" stroke-dasharray="1.5,1.8" fill="none"/>
<path d="M92.2,182.2 H102.8 V193.1 H98.3 V187.5 H92.2 Z" fill="#dcdcdc"/>
<path d="M109,196.4 V187.6 H112.2 V182.2 H122.8 V193.1 H119.4 V196.4 Z" fill="#dcdcdc"/>
<rect x="112.8" y="187.8" width="6" height="5" fill="#4c4c4c"/>
<rect x="128.5" y="182.5" width="15" height="14" rx="3" stroke="#cfcfcf" stroke-width="1.2" stroke-dasharray="1.6,1.9" fill="none"/>
<rect x="132.8" y="186.5" width="6.5" height="6.5" fill="#dcdcdc"/>
<!-- options -->
<rect x="1006" y="180" width="64.5" height="18.5" rx="4" fill="#262626"/>
<path d="M1062.3,188.5 L1065.3,191.5 L1068.3,188.5" stroke="#e0e0e0" stroke-width="1.3" fill="none"/>
</g>
</svg>
<!-- header texts -->
<div class="t" style="left:75px;top:154px">Object Mode</div>
<div class="t" style="left:175px;top:154px">View</div>
<div class="t" style="left:217px;top:154px">Select</div>
<div class="t" style="left:265px;top:154px">Add</div>
<div class="t" style="left:301px;top:154px">Object</div>
<div class="t" style="left:435px;top:154px">Global</div>
<div class="t" style="left:1013px;top:182px">Options</div>
<!-- viewport text -->
<div class="t" style="left:69px;top:213px">User Perspective</div>
<div class="t" style="left:69px;top:232px;letter-spacing:-0.04px">(287) Scene Collection | mars_building_11</div>
</body></html>
